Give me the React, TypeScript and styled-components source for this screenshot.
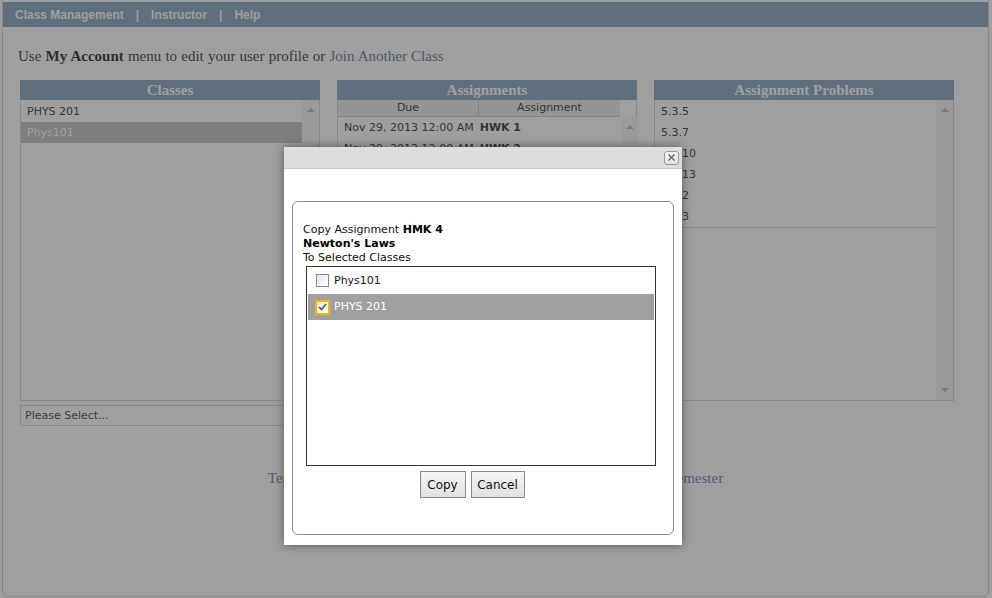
import styled, { createGlobalStyle } from "styled-components";

const GlobalStyle = createGlobalStyle`
  html, body {
    margin: 0;
    padding: 0;
    background: #ffffff;
  }
  body {
    font-family: "DejaVu Sans", Verdana, sans-serif;
    font-size: 11px;
    color: #333;
  }
`;

const Screen = styled.div`
  position: relative;
  width: 992px;
  height: 598px;
  overflow: hidden;
`;

const Page = styled.div`
  box-sizing: border-box;
  width: 987px;
  height: 597px;
  margin-left: 2px;
  padding-top: 2px;
  border: 1px solid #d8d8d8;
  border-top: none;
  border-radius: 0 0 6px 6px;
  display: flex;
  flex-direction: column;
`;

const NavBar = styled.div`
  height: 25px;
  background: #98b2cb;
  display: flex;
  align-items: center;
  padding-left: 12px;
  font-family: "Liberation Sans", Arial, sans-serif;
  font-weight: bold;
  font-size: 12px;
  color: #ffffff;
`;

const NavSep = styled.span`
  padding: 0 12px;
`;

const Intro = styled.p`
  margin: 21px 0 0 15px;
  font-family: "Liberation Serif", "Times New Roman", serif;
  font-size: 15px;
  word-spacing: 0.4px;
  color: #5a5a5a;
  b {
    color: #4a4a4a;
  }
`;

const Link = styled.span`
  color: #7b8da8;
`;

const Panels = styled.div`
  display: flex;
  gap: 17px;
  margin: 15px 0 0 17px;
`;

const Panel = styled.div`
  width: 300px;
  display: flex;
  flex-direction: column;
`;

const PanelHeader = styled.div`
  height: 20px;
  line-height: 20px;
  background: #98b2cb;
  color: #ffffff;
  text-align: center;
  font-family: "Liberation Serif", "Times New Roman", serif;
  font-weight: bold;
  font-size: 15px;
`;

const ListBox = styled.div`
  box-sizing: border-box;
  height: 301px;
  border: 1px solid #dcdcdc;
  border-top: none;
  display: flex;
  background: #ffffff;
`;

const ListContent = styled.div`
  flex: 1;
  display: flex;
  flex-direction: column;
`;

const ListRow = styled.div<{ $selected?: boolean }>`
  height: 21px;
  line-height: 21px;
  padding-left: 6px;
  font-size: 11px;
  color: ${p => (p.$selected ? "#ffffff" : "#555555")};
  background: ${p => (p.$selected ? "#cbcbcb" : "transparent")};
`;

const RowList = styled.div<{ $underline?: boolean }>`
  display: flex;
  flex-direction: column;
  padding-top: 1px;
  border-bottom: ${p => (p.$underline ? "1px solid #dcdcdc" : "none")};
`;

const ScrollTrack = styled.div`
  width: 17px;
  display: flex;
  flex-direction: column;
  justify-content: space-between;
  align-items: center;
  padding: 8px 0;
  background: #f7f7f7;
`;

const Arrow = styled.div<{ $down?: boolean }>`
  width: 0;
  height: 0;
  border-left: 4px solid transparent;
  border-right: 4px solid transparent;
  ${p =>
    p.$down
      ? "border-top: 4px solid #c4c4c4;"
      : "border-bottom: 4px solid #c4c4c4;"}
`;

const ColumnHeads = styled.div`
  display: flex;
  margin-right: 18px;
  background: #efefef;
  border-bottom: 1px solid #cfcfcf;
`;

const ColumnHead = styled.div<{ $w: number }>`
  width: ${p => p.$w}px;
  height: 16px;
  line-height: 16px;
  text-align: center;
  color: #555;
  & + & {
    border-left: 1px solid #cfcfcf;
  }
`;

const AssignBody = styled.div`
  flex: 1;
  display: flex;
`;

const AssignRow = styled.div`
  height: 21px;
  line-height: 21px;
  padding-left: 6px;
  color: #555;
  font-size: 11px;
  white-space: nowrap;
  b {
    margin-left: 6px;
    font-weight: bold;
  }
`;

const Select = styled.div`
  box-sizing: border-box;
  height: 21px;
  margin-top: 4px;
  line-height: 19px;
  padding-left: 4px;
  border: 1px solid #dcdcdc;
  color: #666;
  width: 420px;
`;

const Footer = styled.div`
  margin-top: 44px;
  text-align: center;
  font-family: "Liberation Serif", "Times New Roman", serif;
  font-size: 15px;
  word-spacing: 0.5px;
  color: #7f93bd;
`;

const Overlay = styled.div`
  position: absolute;
  inset: 0;
  background: rgba(0, 0, 0, 0.375);
`;

const Dialog = styled.div`
  position: absolute;
  left: 284px;
  top: 147px;
  width: 398px;
  height: 398px;
  background: #ffffff;
  box-shadow: 0 0 9px rgba(0, 0, 0, 0.45);
  display: flex;
  flex-direction: column;
`;

const TitleBar = styled.div`
  height: 21px;
  background: #dddddd;
  border-bottom: 1px solid #c9c9c9;
  display: flex;
  justify-content: flex-end;
  align-items: center;
  padding-right: 3px;
`;

const CloseButton = styled.div`
  box-sizing: border-box;
  width: 15px;
  height: 14px;
  border: 1px solid #9a9a9a;
  border-radius: 3px;
  background: linear-gradient(#f4f4f4, #e2e2e2);
  display: flex;
  align-items: center;
  justify-content: center;
`;

const Fieldset = styled.div`
  flex: 1;
  margin: 32px 8px 10px 8px;
  border: 1px solid #8e8e8e;
  border-radius: 6px;
  padding: 21px 0 0 10px;
  display: flex;
  flex-direction: column;
  color: #111;
  line-height: 14px;
`;

const Title = styled.div`
  b {
    font-weight: bold;
    color: #000;
  }
`;

const ChooserWrap = styled.div`
  width: 350px;
  margin: 1px 0 0 3px;
  display: flex;
  flex-direction: column;
`;

const Chooser = styled.div`
  box-sizing: border-box;
  height: 200px;
  border: 1px solid #333;
  padding: 2px 1px;
  display: flex;
  flex-direction: column;
  gap: 2px;
`;

const ChoiceRow = styled.div<{ $selected?: boolean }>`
  height: ${p => (p.$selected ? 26 : 23)}px;
  display: flex;
  align-items: center;
  gap: 5px;
  padding-left: 8px;
  background: ${p => (p.$selected ? "#a0a0a0" : "transparent")};
  color: ${p => (p.$selected ? "#ffffff" : "#111")};
  font-size: 11px;
`;

const Box = styled.div<{ $checked?: boolean }>`
  box-sizing: border-box;
  width: 13px;
  height: 13px;
  border: 1px solid ${p => (p.$checked ? "#f2b800" : "#8a8a8a")};
  outline: ${p => (p.$checked ? "1px solid #f2b800" : "none")};
  background: linear-gradient(135deg, #e4e4e4, #ffffff);
  display: flex;
  align-items: center;
  justify-content: center;
`;

const Buttons = styled.div`
  display: flex;
  justify-content: center;
  gap: 5px;
  margin-top: 5px;
  padding-right: 18px;
`;

const Button = styled.div<{ $w: number }>`
  box-sizing: border-box;
  width: ${p => p.$w}px;
  height: 27px;
  border: 1px solid #888;
  background: linear-gradient(#f7f7f7, #e0e0e0);
  display: flex;
  align-items: center;
  justify-content: center;
  font-size: 12px;
  color: #111;
`;

const classes = ["PHYS 201", "Phys101"];
const problems = ["5.3.5", "5.3.7", "5.3.10", "5.3.13", "5.3.2", "5.3.3"];
const assignments = [
  { due: "Nov 29, 2013 12:00 AM", name: "HWK 1" },
  { due: "Nov 29, 2013 12:00 AM", name: "HWK 2" },
];

const App = () => {
  return (
    <>
      <GlobalStyle />
      <Screen>
        <Page>
          <NavBar>
            <span>Class Management</span>
            <NavSep>|</NavSep>
            <span>Instructor</span>
            <NavSep>|</NavSep>
            <span>Help</span>
          </NavBar>
          <Intro>
            Use <b>My Account</b> menu to edit your user profile or{" "}
            <Link>Join Another Class</Link>
          </Intro>
          <Panels>
            <Panel>
              <PanelHeader>Classes</PanelHeader>
              <ListBox>
                <ListContent>
                  <RowList>
                    {classes.map(c => (
                      <ListRow key={c} $selected={c === "Phys101"}>
                        {c}
                      </ListRow>
                    ))}
                  </RowList>
                </ListContent>
                <ScrollTrack>
                  <Arrow />
                </ScrollTrack>
              </ListBox>
              <Select>Please Select...</Select>
            </Panel>
            <Panel>
              <PanelHeader>Assignments</PanelHeader>
              <ListBox>
                <ListContent>
                  <ColumnHeads>
                    <ColumnHead $w={140}>Due</ColumnHead>
                    <ColumnHead $w={141}>Assignment</ColumnHead>
                  </ColumnHeads>
                  <AssignBody>
                    <ListContent>
                      {assignments.map(a => (
                        <AssignRow key={a.name}>
                          {a.due}
                          <b>{a.name}</b>
                        </AssignRow>
                      ))}
                    </ListContent>
                    <ScrollTrack>
                      <Arrow />
                      <Arrow $down />
                    </ScrollTrack>
                  </AssignBody>
                </ListContent>
              </ListBox>
            </Panel>
            <Panel>
              <PanelHeader>Assignment Problems</PanelHeader>
              <ListBox>
                <ListContent>
                  <RowList $underline>
                    {problems.map(p => (
                      <ListRow key={p}>{p}</ListRow>
                    ))}
                  </RowList>
                </ListContent>
                <ScrollTrack>
                  <Arrow />
                  <Arrow $down />
                </ScrollTrack>
              </ListBox>
            </Panel>
          </Panels>
          <Footer>
            Teaching Assistants &nbsp;|&nbsp; Add Class &nbsp;|&nbsp; Copy
            Classes From Previous Semester
          </Footer>
        </Page>
        <Overlay />
        <Dialog>
          <TitleBar>
            <CloseButton>
              <svg width="7" height="7" viewBox="0 0 7 7">
                <path d="M0.5 0.5 L6.5 6.5 M6.5 0.5 L0.5 6.5" stroke="#555" strokeWidth="1.1" />
              </svg>
            </CloseButton>
          </TitleBar>
          <Fieldset>
            <Title>
              Copy Assignment <b>HMK 4</b>
            </Title>
            <Title>
              <b>Newton's Laws</b>
            </Title>
            <Title>To Selected Classes</Title>
            <ChooserWrap>
              <Chooser>
                <ChoiceRow>
                  <Box />
                  Phys101
                </ChoiceRow>
                <ChoiceRow $selected>
                  <Box $checked>
                    <svg width="9" height="8" viewBox="0 0 9 8">
                      <path
                        d="M1 4 L3.5 6.5 L8 1"
                        fill="none"
                        stroke="#555"
                        strokeWidth="1.6"
                      />
                    </svg>
                  </Box>
                  PHYS 201
                </ChoiceRow>
              </Chooser>
              <Buttons>
                <Button $w={46}>Copy</Button>
                <Button $w={54}>Cancel</Button>
              </Buttons>
            </ChooserWrap>
          </Fieldset>
        </Dialog>
      </Screen>
    </>
  );
};

export default App;
